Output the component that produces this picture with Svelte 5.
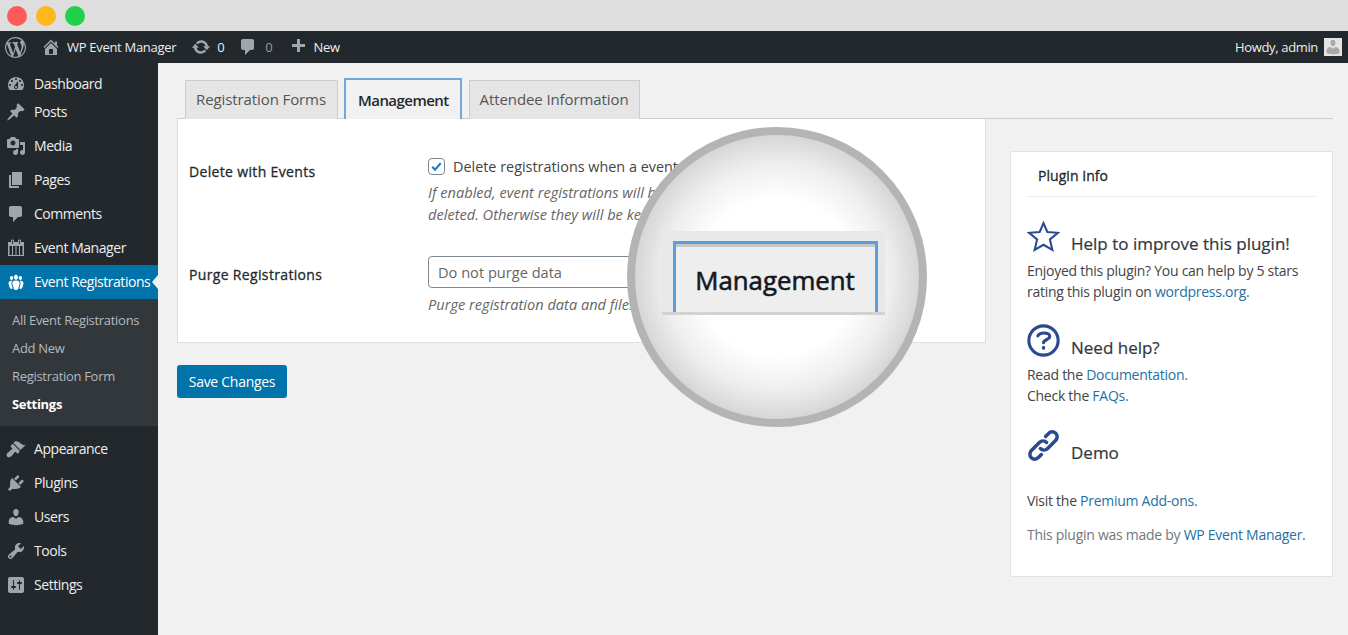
<script>
  const icons = {
    dashboard: 'M3.76 16h12.48c1.1-1.37 1.76-3.11 1.76-5 0-4.42-3.58-8-8-8s-8 3.58-8 8c0 1.89.66 3.63 1.76 5zM10 4c.55 0 1 .45 1 1s-.45 1-1 1-1-.45-1-1 .45-1 1-1zM6 6c.55 0 1 .45 1 1s-.45 1-1 1-1-.45-1-1 .45-1 1-1zm8 0c.55 0 1 .45 1 1s-.45 1-1 1-1-.45-1-1 .45-1 1-1zm-5.37 5.55L12 7v6c0 1.1-.9 2-2 2s-2-.9-2-2c0-.57.24-1.08.63-1.45zM4 10c.55 0 1 .45 1 1s-.45 1-1 1-1-.45-1-1 .45-1 1-1zm12 0c.55 0 1 .45 1 1s-.45 1-1 1-1-.45-1-1 .45-1 1-1zm-5 3c0-.55-.45-1-1-1s-1 .45-1 1 .45 1 1 1 1-.45 1-1z',
    post: 'M10.44 3.02l1.82-1.82 6.36 6.35-1.83 1.82c-1.05-.68-2.48-.57-3.41.36l-.75.75c-.92.93-1.04 2.35-.35 3.41l-1.83 1.82-2.41-2.41-2.8 2.79c-.42.42-3.38 2.71-3.8 2.29s1.86-3.39 2.28-3.81l2.79-2.79L4.1 9.36l1.83-1.82c1.05.69 2.48.57 3.4-.36l.75-.75c.93-.92 1.05-2.35.36-3.41z',
    media: 'M13 11V4c0-.55-.45-1-1-1h-1.67L9 1H5L3.67 3H2c-.55 0-1 .45-1 1v7c0 .55.45 1 1 1h10c.55 0 1-.45 1-1zM7 4.5c1.38 0 2.5 1.12 2.5 2.5S8.38 9.5 7 9.5 4.5 8.38 4.5 7 5.62 4.5 7 4.5zM14 6h5v10.5c0 1.38-1.12 2.5-2.5 2.5S14 17.88 14 16.5s1.12-2.5 2.5-2.5c.17 0 .34.02.5.05V9h-3V6zm-4 8.05V13h2v3.5c0 1.38-1.12 2.5-2.5 2.5S7 17.88 7 16.5 8.12 14 9.5 14c.17 0 .34.02.5.05z',
    page: 'M6 15V2h10v13H6zm-1 1h8v2H3V5h2v11z',
    comment: 'M5 2h9c1.1 0 2 .9 2 2v7c0 1.1-.9 2-2 2h-2l-5 5v-5H5c-1.1 0-2-.9-2-2V4c0-1.1.9-2 2-2z',
    calendar: 'M15 4h3v14H2V4h3V3c0-.83.67-1.5 1.5-1.5S8 2.17 8 3v1h4V3c0-.83.67-1.5 1.5-1.5S15 2.17 15 3v1zM6 3v2.5c0 .28.22.5.5.5s.5-.22.5-.5V3c0-.28-.22-.5-.5-.5S6 2.72 6 3zm7 0v2.5c0 .28.22.5.5.5s.5-.22.5-.5V3c0-.28-.22-.5-.5-.5s-.5.22-.5.5zM3.5 8v9h2.5V8H3.5zm3.5 0v9h2.5V8H7zm3.5 0v9H13V8h-2.5zM14 8v9h2.5V8H14z',
    groups: 'M8.03 4.46c-.29 1.28.55 3.46 1.97 3.46 1.41 0 2.25-2.18 1.96-3.46-.22-.98-1.08-1.63-1.96-1.63-.89 0-1.74.65-1.97 1.63zm-4.13.9c-.25 1.08.47 2.93 1.67 2.93s1.92-1.85 1.67-2.93c-.19-.83-.92-1.39-1.67-1.39s-1.48.56-1.67 1.39zm8.86 0c-.25 1.08.47 2.93 1.66 2.93 1.2 0 1.92-1.85 1.67-2.93-.19-.83-.92-1.39-1.67-1.39-.74 0-1.47.56-1.66 1.39zm-.59 11.43l1.25-4.3C14.2 10 12.71 8.47 10 8.47c-2.72 0-4.21 1.53-3.44 4.02l1.26 4.3C8.05 17.51 9 18 10 18c.98 0 1.94-.49 2.17-1.21zm-6.1-7.63c-.49.67-.96 1.83-.42 3.59l1.12 3.79c-.34.2-.77.31-1.2.31-.85 0-1.65-.41-1.85-1.03l-1.07-3.65c-.65-2.11.61-3.4 2.92-3.4.27 0 .54.02.79.06-.1.1-.2.22-.29.33zm8.35-.39c2.31 0 3.58 1.29 2.92 3.4l-1.07 3.65c-.2.62-1 1.03-1.85 1.03-.43 0-.86-.11-1.2-.31l1.11-3.77c.55-1.78.08-2.94-.42-3.61-.08-.11-.18-.23-.28-.33.25-.04.51-.06.79-.06z',
    appearance: 'M14.48 11.06L7.41 3.99l1.5-1.5c.5-.56 2.3-.47 3.51.32 1.21.8 1.43 1.28 2.91 2.1 1.18.64 2.45 1.26 4.45.85zm-.71.71L6.7 4.7 4.93 6.47c-.39.39-.39 1.02 0 1.41l1.06 1.06c.39.39.39 1.03 0 1.42-.6.6-1.43 1.11-2.21 1.69-.35.26-.7.53-1.01.84C1.43 13.23 0 15.5 1 17.5c1 1.5 3.5.5 5.1-1.1.31-.31.58-.66.84-1.01.58-.78 1.09-1.61 1.69-2.21.39-.39 1.03-.39 1.42 0l1.06 1.06c.39.39 1.02.39 1.41 0z',
    plugin: 'M13.11 4.36L9.87 7.6 8 5.73l3.24-3.24c.35-.34 1.05-.2 1.56.32.52.51.66 1.21.31 1.55zm-8 1.77l.91-1.12 9.01 9.01-1.19.84c-.71.71-2.63 1.16-3.82 1.16H6.14L4.9 17.26c-.59.59-1.54.59-2.12 0-.59-.58-.59-1.53 0-2.12l1.24-1.24v-3.88c0-1.13.4-3.19 1.09-3.89zm7.26 3.97l3.24-3.24c.34-.35 1.04-.21 1.55.31.52.51.66 1.21.31 1.55l-3.24 3.25z',
    users: 'M10 9.25c-2.27 0-2.73-3.44-2.73-3.44C7 4.02 7.82 2 9.97 2c2.16 0 2.98 2.02 2.71 3.81 0 0-.41 3.44-2.68 3.44zm0 2.57L12.72 10c2.39 0 4.52 2.33 4.52 4.53v2.49s-3.65 1.13-7.24 1.13c-3.65 0-7.24-1.13-7.24-1.13v-2.49c0-2.25 1.94-4.48 4.47-4.48z',
    tools: 'M16.68 9.77c-1.34 1.34-3.3 1.67-4.95.99l-5.41 6.52c-.99.99-2.59.99-3.58 0s-.99-2.59 0-3.57l6.52-5.42c-.68-1.65-.35-3.61.99-4.95 1.28-1.28 3.12-1.62 4.72-1.06l-2.89 2.89 2.82 2.82 2.86-2.87c.53 1.58.18 3.39-1.08 4.65zM3.81 16.21c.4.39 1.04.39 1.43 0 .4-.4.4-1.04 0-1.43-.39-.4-1.03-.4-1.43 0-.39.39-.39 1.03 0 1.43z',
    settings: 'M18 16V4c0-1.1-.9-2-2-2H4c-1.1 0-2 .9-2 2v12c0 1.1.9 2 2 2h12c1.1 0 2-.9 2-2zM8 11h1c.55 0 1 .45 1 1s-.45 1-1 1H8v1.5c0 .28-.22.5-.5.5s-.5-.22-.5-.5V13H6c-.55 0-1-.45-1-1s.45-1 1-1h1V5.5c0-.28.22-.5.5-.5s.5.22.5.5V11zm5-2h-1c-.55 0-1-.45-1-1s.45-1 1-1h1V5.5c0-.28.22-.5.5-.5s.5.22.5.5V7h1c.55 0 1 .45 1 1s-.45 1-1 1h-1v5.5c0 .28-.22.5-.5.5s-.5-.22-.5-.5V9z',
    home: 'M16 8.5l1.53 1.53-1.06 1.06L10 4.62l-6.47 6.47-1.06-1.06L10 2.5l4 4v-2h2v4zm-6-2.46l6 5.99V18H4v-5.97zM12 17v-5H8v5h4z',
    update: 'M10.2 3.28c3.53 0 6.43 2.61 6.92 6h2.08l-3.5 4-3.5-4h2.32c-.45-1.97-2.21-3.44-4.32-3.44-1.45 0-2.73.71-3.54 1.78L4.95 5.66C6.23 4.2 8.11 3.28 10.2 3.28zm-.4 13.44c-3.52 0-6.43-2.61-6.92-6H.8l3.5-4c1.17 1.33 2.33 2.67 3.5 4H5.48c.45 1.97 2.21 3.44 4.32 3.44 1.45 0 2.73-.71 3.54-1.78l1.71 1.95c-1.28 1.46-3.15 2.39-5.25 2.39z',
    plus: 'M17 7v3h-5v5H9v-5H4V7h5V2h3v5h5z',
    wp: 'M20 10c0-5.51-4.49-10-10-10C4.48 0 0 4.49 0 10c0 5.52 4.48 10 10 10 5.51 0 10-4.48 10-10zM7.78 15.37L4.37 6.22c.55-.02 1.17-.08 1.17-.08.5-.06.44-1.13-.06-1.11 0 0-1.45.11-2.37.11-.18 0-.37 0-.58-.01C4.12 2.69 6.89 1.16 10 1.16c2.32 0 4.43.87 6.01 2.34-.68-.11-1.65.39-1.65 1.58 0 .74.45 1.36.9 2.1.35.61.55 1.36.55 2.46 0 1.49-1.4 5-1.4 5l-3.03-8.37c.54-.02.82-.17.82-.17.5-.05.44-1.25-.06-1.22 0 0-1.44.12-2.38.12-.87 0-2.33-.12-2.33-.12-.5-.03-.56 1.2-.06 1.22l.92.08 1.26 3.41zM17.41 10c.24-.64.74-1.87.43-4.25.7 1.29 1.05 2.71 1.05 4.25 0 3.29-1.73 6.24-4.4 7.78.97-2.59 1.94-5.2 2.92-7.78zM6.1 18.09C3.12 16.65 1.11 13.53 1.11 10c0-1.3.23-2.48.72-3.59C3.25 10.3 4.67 14.2 6.1 18.09zm4.03-6.63l2.58 6.98c-.86.29-1.76.45-2.71.45-.79 0-1.57-.11-2.29-.33.81-2.38 1.62-4.74 2.42-7.1z'
  };

  const topMenu = [
    { label: 'Dashboard', icon: 'dashboard' },
    { label: 'Posts', icon: 'post' },
    { label: 'Media', icon: 'media' },
    { label: 'Pages', icon: 'page' },
    { label: 'Comments', icon: 'comment' },
    { label: 'Event Manager', icon: 'calendar' }
  ];
  const subMenu = ['All Event Registrations', 'Add New', 'Registration Form', 'Settings'];
  const bottomMenu = [
    { label: 'Appearance', icon: 'appearance' },
    { label: 'Plugins', icon: 'plugin' },
    { label: 'Users', icon: 'users' },
    { label: 'Tools', icon: 'tools' },
    { label: 'Settings', icon: 'settings' }
  ];
</script>

<div class="window-bar">
  <span class="light red"></span>
  <span class="light yellow"></span>
  <span class="light green"></span>
</div>

<header class="adminbar">
  <svg class="wp-logo" viewBox="0 0 20 20"><path d={icons.wp} /></svg>
  <svg class="bar-icon home" viewBox="0 0 20 20"><path d={icons.home} /></svg>
  <span class="site">WP Event Manager</span>
  <svg class="bar-icon update" viewBox="0 0 20 20"><path d={icons.update} /></svg>
  <span class="count">0</span>
  <svg class="bar-icon bubble" viewBox="0 0 20 20"><path d={icons.comment} /></svg>
  <span class="count dim">0</span>
  <svg class="bar-icon plus" viewBox="0 0 20 20"><path d={icons.plus} /></svg>
  <span class="new">New</span>
  <span class="howdy">Howdy, admin</span>
  <span class="avatar">
    <svg viewBox="0 0 20 20"><path d={icons.users} /></svg>
  </span>
</header>

<div class="layout">
  <nav class="sidebar">
    {#each topMenu as item}
      <div class="menu-item">
        <svg viewBox="0 0 20 20"><path d={icons[item.icon]} /></svg>
        <span>{item.label}</span>
      </div>
    {/each}
    <div class="menu-item active">
      <svg viewBox="0 0 20 20"><path d={icons.groups} /></svg>
      <span>Event Registrations</span>
    </div>
    <div class="submenu">
      {#each subMenu as sub}
        <div class="sub-item" class:current={sub === 'Settings'}>{sub}</div>
      {/each}
    </div>
    {#each bottomMenu as item}
      <div class="menu-item">
        <svg viewBox="0 0 20 20"><path d={icons[item.icon]} /></svg>
        <span>{item.label}</span>
      </div>
    {/each}
  </nav>

  <main class="content">
    <div class="tabs">
      <div class="tab">Registration Forms</div>
      <div class="tab selected">Management</div>
      <div class="tab">Attendee Information</div>
    </div>

    <div class="columns">
      <div class="left">
        <section class="panel">
          <div class="row first">
            <div class="label">Delete with Events</div>
            <div class="field">
              <div class="check-line">
                <span class="checkbox">
                  <svg viewBox="0 0 16 16"><path d="M3.5 8.2l3 3.2 6-7" /></svg>
                </span>
                <span>Delete registrations when a event is deleted</span>
              </div>
              <p class="desc">If enabled, event registrations will be deleted when the event listing is<br />deleted. Otherwise they will be kept in the database.</p>
            </div>
          </div>
          <div class="row second">
            <div class="label">Purge Registrations</div>
            <div class="field">
              <div class="select">Do not purge data</div>
              <p class="desc">Purge registration data and files after the chosen period.</p>
            </div>
          </div>
        </section>
        <button class="save">Save Changes</button>
      </div>

      <aside class="info">
        <h3>Plugin Info</h3>
        <div class="info-head help">
          <svg viewBox="0 0 32 32"><path class="line" d="M16 3l3.7 8.6 10.300.8-7.800 6.400 2.400 10.200-8.600-5-8.600 5 2.400-10.200-7.800-6.400 10.300-.8z" /></svg>
          <h4>Help to improve this plugin!</h4>
        </div>
        <p>Enjoyed this plugin? You can help by 5 stars<br />rating this plugin on <a href="#top">wordpress.org.</a></p>
        <div class="info-head need">
          <svg viewBox="0 0 32 32">
            <circle class="line heavy" cx="16" cy="16" r="14.2" />
            <path class="line heavy" d="M10.5 11.5c1-1.800 3-2.700 5.700-2.700 3.400 0 5.800 1.200 5.800 3.400 0 3.300-6 2.800-6 6" />
            <path class="line heavy" d="M16 22.500v1" />
          </svg>
          <h4>Need help?</h4>
        </div>
        <p>Read the <a href="#top">Documentation.</a><br />Check the <a href="#top">FAQs.</a></p>
        <div class="info-head demo">
          <svg viewBox="0 0 32 32">
            <path class="line thick" d="M13 19c2 2 5 1.800 7-.2l7.500-7.500c2.300-2.300 2.300-5.200.3-7.100s-4.800-2-7.100.3l-2.700 2.700" />
            <path class="line thick" d="M19 13c-2-2-5-1.800-7 .2l-7.500 7.500c-2.300 2.300-2.300 5.200-.3 7.100s4.800 2 7.100-.3l2.700-2.700" />
          </svg>
          <h4>Demo</h4>
        </div>
        <p class="visit">Visit the <a href="#top">Premium Add-ons.</a></p>
        <p class="made">This plugin was made by <a href="#top">WP Event Manager.</a></p>
      </aside>
    </div>
  </main>
</div>

<div class="magnifier">
  <div class="mag-strip">
    <div class="mag-tab">Management</div>
  </div>
</div>

<style>
  :global(body) {
    margin: 0;
    background: #f1f1f1;
    font-family: "Open Sans", "Noto Sans", sans-serif;
    overflow: hidden;
  }

  .window-bar {
    height: 31px;
    background: #dedede;
    display: flex;
    align-items: flex-start;
    padding: 6px 0 0 7px;
    box-sizing: border-box;
    gap: 9px;
  }

  .light {
    width: 20px;
    height: 20px;
    border-radius: 50%;
  }
  .red { background: #fc5b57; }
  .yellow { background: #ffb81c; }
  .green { background: #1fd14b; }

  .adminbar {
    height: 32px;
    background: #23282d;
    display: flex;
    align-items: center;
    color: #eee;
    font-size: 13px;
    letter-spacing: -0.3px;
  }
  .adminbar svg { fill: #a0a5aa; }
  .wp-logo { width: 21px; height: 21px; margin-left: 5px; }
  .bar-icon { width: 20px; height: 20px; }
  .home { margin-left: 15px; }
  .site { margin-left: 6px; }
  .update { margin-left: 15px; }
  .count { margin-left: 6px; }
  .count.dim { color: #9a9a9a; margin-left: 7px; }
  .bubble { margin-left: 14px; }
  .plus { margin-left: 16px; }
  .new { margin-left: 5px; }
  .howdy { margin-left: auto; letter-spacing: -0.35px; }
  .avatar {
    width: 18px;
    height: 18px;
    margin: 0 6px 0 6px;
    background: #e4e4e4;
    display: flex;
    overflow: hidden;
  }
  .adminbar .avatar svg { fill: #a8a8a8; width: 18px; height: 18px; }

  .layout {
    display: flex;
    height: 572px;
  }

  .sidebar {
    width: 158px;
    flex: none;
    background: #23282d;
    padding-top: 10px;
    box-sizing: border-box;
  }

  .menu-item {
    position: relative;
    height: 34px;
    display: flex;
    align-items: center;
    color: #eee;
    font-size: 14px;
    letter-spacing: -0.45px;
    white-space: nowrap;
  }
  .menu-item:first-child { height: 22px; }
  .menu-item span { padding-bottom: 2px; }
  .menu-item svg {
    width: 20px;
    height: 20px;
    margin: 0 8px 0 6px;
    fill: #a0a5aa;
    flex: none;
  }
  .menu-item.active {
    background: #0073aa;
    color: #fff;
  }
  .menu-item.active svg { fill: #fff; }
  .menu-item.active::after {
    content: '';
    position: absolute;
    right: 0;
    top: 10px;
    border-style: solid;
    border-color: transparent #f1f1f1 transparent transparent;
    border-width: 7px 6px 7px 0;
  }

  .submenu {
    background: #32373c;
    padding: 7px 0 8px;
    margin-bottom: 6px;
  }
  .sub-item {
    height: 28px;
    line-height: 28px;
    padding-left: 12px;
    font-size: 13px;
    letter-spacing: -0.3px;
    color: #b4b9be;
    white-space: nowrap;
  }
  .sub-item.current { color: #fff; font-weight: 700; }

  .content {
    flex: 1;
    padding: 15px 15px 0 19px;
    min-width: 0;
  }

  .tabs {
    display: flex;
    align-items: flex-end;
    height: 41px;
    padding-left: 8px;
    border-bottom: 1px solid #ccc;
    box-sizing: border-box;
    gap: 6px;
  }
  .tab {
    height: 39px;
    box-sizing: border-box;
    border: 1px solid #ccc;
    border-bottom: none;
    background: #e5e5e5;
    padding: 0 11px 3px 10px;
    display: flex;
    align-items: center;
    font-size: 15px;
    color: #555;
    margin-bottom: -1px;
    letter-spacing: -0.1px;
  }
  .tab.selected {
    height: 41px;
    background: #f1f1f1;
    border: 2px solid #72a8d8;
    border-bottom: none;
    font-weight: 600;
    color: #23282d;
    padding: 0 11px 0 12px;
    margin-right: 1px;
    letter-spacing: -0.55px;
  }

  .columns {
    display: flex;
    align-items: flex-start;
    gap: 24px;
  }
  .left { width: 809px; flex: none; }

  .panel {
    background: #fff;
    border: 1px solid #e0e0e0;
    border-top: none;
    height: 224px;
    box-sizing: border-box;
    padding: 37px 11px 0;
  }

  .row { display: flex; }
  .row.second { margin-top: 31px; }
  .label {
    width: 239px;
    flex: none;
    font-size: 14px;
    color: #23282d;
    line-height: 32px;
    letter-spacing: 0.34px;
    -webkit-text-stroke: 0.3px #23282d;
  }
  .second .label { padding-top: 3px; }
  .field { flex: 1; min-width: 0; }

  .check-line {
    display: flex;
    align-items: center;
    gap: 8px;
    font-size: 14.4px;
    color: #444;
    height: 20px;
    white-space: nowrap;
  }
  .checkbox {
    width: 17px;
    height: 17px;
    box-sizing: border-box;
    border: 1px solid #7e8993;
    border-radius: 4px;
    display: flex;
  }
  .checkbox svg {
    width: 15px;
    height: 15px;
    fill: none;
    stroke: #1e7cc0;
    stroke-width: 2.4;
  }

  .desc {
    margin: 5px 0 0;
    font-size: 14.6px;
    line-height: 22px;
    font-style: italic;
    color: #666;
    white-space: nowrap;
  }

  .select {
    width: 400px;
    height: 32px;
    box-sizing: border-box;
    border: 1px solid #7e8993;
    border-radius: 4px;
    padding-left: 9px;
    display: flex;
    align-items: center;
    font-size: 14.6px;
    color: #666;
  }

  .save {
    display: block;
    margin-top: 22px;
    width: 110px;
    height: 33px;
    background: #0073aa;
    border: none;
    border-radius: 3px;
    color: #fff;
    font: inherit;
    font-size: 14px;
    letter-spacing: -0.28px;
    padding: 0;
  }

  .info {
    margin-top: 32px;
    width: 323px;
    height: 426px;
    box-sizing: border-box;
    background: #fff;
    border: 1px solid #e2e2e2;
    padding: 0 16px;
    color: #444;
    font-size: 14px;
    letter-spacing: -0.27px;
  }
  .info h3 {
    margin: 0;
    height: 45px;
    line-height: 48px;
    padding-left: 11px;
    font-size: 14px;
    font-weight: 400;
    color: #23282d;
    border-bottom: 1px solid #eee;
    box-sizing: border-box;
    letter-spacing: 0.05px;
    -webkit-text-stroke: 0.3px #23282d;
  }
  .info-head {
    display: flex;
    align-items: flex-end;
    gap: 11px;
  }
  .info-head svg {
    width: 33px;
    height: 33px;
    flex: none;
    margin-bottom: 3px;
  }
  .info-head h4 {
    margin: 0;
    font-size: 17px;
    font-weight: 400;
    color: #32373c;
    line-height: 24px;
    letter-spacing: 0;
    -webkit-text-stroke: 0.2px #32373c;
  }
  .line {
    fill: none;
    stroke: #2a4a8f;
    stroke-width: 2;
    stroke-linecap: round;
    stroke-linejoin: miter;
  }
  .line.heavy { stroke-width: 3; }
  .line.thick { stroke-width: 3.4; }
  .info-head.help { margin-top: 23px; }
  .info-head.need { margin-top: 22px; }
  .info-head.demo { margin-top: 23px; }
  .info p {
    margin: 4px 0 0;
    line-height: 21px;
    white-space: nowrap;
  }
  .info p.visit { margin-top: 25px; }
  .info p.made { margin-top: 13px; color: #72777c; }
  .info a {
    color: #2271a5;
    text-decoration: none;
  }

  .magnifier {
    position: absolute;
    left: 627px;
    top: 127px;
    width: 300px;
    height: 300px;
    box-sizing: border-box;
    border: 8px solid #b4b4b4;
    border-radius: 50%;
    background: radial-gradient(circle closest-side, #fff 0%, #fff 55%, #eeeeee 80%, #d6d6d6 100%);
    display: flex;
    align-items: center;
    justify-content: center;
  }
  .mag-strip {
    width: 223px;
    height: 84px;
    margin: 0 8px 8px 0;
    box-sizing: border-box;
    background: #e8e8e8;
    border-bottom: 3px solid #d2d2d2;
    padding: 10px 7px 0 11px;
    display: flex;
    flex: none;
  }
  .mag-tab {
    flex: 1;
    box-sizing: border-box;
    border: 3px solid #5a9fdc;
    border-bottom: none;
    box-shadow: inset 0 3px 0 #c8c8c8;
    background: #eee;
    display: flex;
    align-items: center;
    justify-content: center;
    font-size: 25.8px;
    color: #14181c;
    -webkit-text-stroke: 0.6px #14181c;
    padding-top: 3px;
  }
</style>
